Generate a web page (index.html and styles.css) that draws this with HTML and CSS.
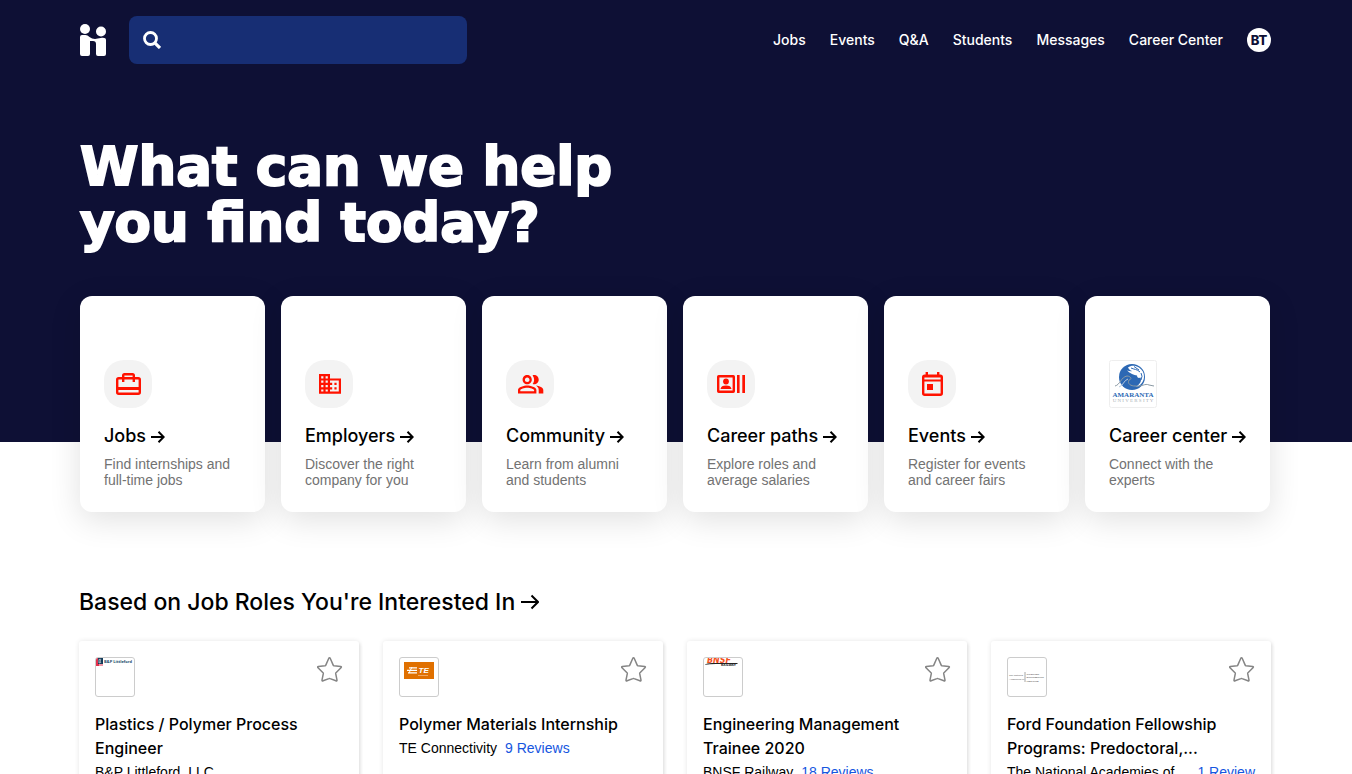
FILE: index.html
```
<!DOCTYPE html>
<html lang="en">
<head>
<meta charset="utf-8">
<meta name="viewport" content="width=device-width, initial-scale=1">
<title>Home</title>
<link rel="stylesheet" href="styles.css">
</head>
<body>
<svg class="defs" aria-hidden="true">
  <symbol id="arrow" viewBox="0 0 14 12"><path d="M0 6h13M7.500.8l5.200 5.200-5.200 5.200" fill="none" stroke="currentColor" stroke-width="2"/></symbol>
  <symbol id="arrow-thin" viewBox="0 0 18 16"><path d="M0 8h17M10.500 1.500l6.500 6.500-6.500 6.500" fill="none" stroke="currentColor" stroke-width="2"/></symbol>
  <symbol id="star" viewBox="0 0 26 26"><path d="M12.500.8q.5 0 .8.700l2.900 6.600q.2.500.8.600l6.600.8q1.400.3.400 1.300l-5 4.900q-.4.400-.3 1l1.300 6.300q.1 1.400-1.100.8L13.100 21.600q-.6-.3-1.200 0l-5.800 2.200q-1.200.6-1.100-.8L6.300 16.700q.1-.6-.3-1l-5-4.900q-1-1 .4-1.300l6.600-.8q.6-.1.800-.6l2.900-6.600q.3-.7.800-.7z" fill="none" stroke="#858585" stroke-width="1.500"/></symbol>
</svg>

<div class="hero">
  <header class="topbar">
    <a class="brand" href="#" aria-label="Home">
      <svg width="26" height="32" viewBox="0 0 26 32" fill="#fff"><circle cx="5" cy="5" r="5"/><circle cx="21" cy="7.500" r="5"/><path d="M0 13q0-2 2-2h3.500q2 0 4 2 2.500 2 5.500 2l7-1.200q4-.3 4 2.200v14q0 2-2 2h-6q-2 0-2-2V20q0-3-3-3h-3v13q0 2-2 2H2q-2 0-2-2z"/></svg>
    </a>
    <form class="search" role="search">
      <svg width="18" height="18" viewBox="0 0 18 18" fill="none" stroke="#fff" stroke-width="2.800"><circle cx="7.500" cy="7.500" r="6"/><path d="M11.800 11.800l5.200 5.200" stroke-width="3.200"/></svg>
      <input class="search-input" type="search" aria-label="Search">
    </form>
    <nav class="nav">
      <a href="#">Jobs</a>
      <a href="#">Events</a>
      <a href="#">Q&amp;A</a>
      <a href="#">Students</a>
      <a href="#">Messages</a>
      <a href="#">Career Center</a>
      <button class="avatar" type="button">BT</button>
    </nav>
  </header>
  <h1 class="headline">What can we help<br>you find today?</h1>
</div>

<main>
  <div class="tiles">
    <a class="tile" href="#">
      <svg class="badge" viewBox="0 0 48 48" fill="none" stroke="#ff1200" stroke-width="2.400"><rect x="13.200" y="18.200" width="22.600" height="15.600" rx="1.500"/><path d="M13 28.500h23" stroke-width="3"/><path d="M19.200 22v-6.500q0-1.300 1.300-1.300h8q1.300 0 1.300 1.300V22"/></svg>
      <h2 class="tile-title">Jobs <svg class="arrow"><use href="#arrow"/></svg></h2>
      <p class="tile-text">Find internships and full-time jobs</p>
    </a>
    <a class="tile" href="#">
      <svg class="badge" viewBox="0 0 48 48" fill="#ff1200"><path transform="translate(11.800 10.700) scale(1.100)" d="M12 7V3H2v18h20V7H12zM6 19H4v-2h2v2zm0-4H4v-2h2v2zm0-4H4V9h2v2zm0-4H4V5h2v2zm4 12H8v-2h2v2zm0-4H8v-2h2v2zm0-4H8V9h2v2zm0-4H8V5h2v2zm10 12h-8v-2h2v-2h-2v-2h2v-2h-2V9h8v10zm-2-8h-2v2h2v-2zm0 4h-2v2h2v-2z"/></svg>
      <h2 class="tile-title">Employers <svg class="arrow"><use href="#arrow"/></svg></h2>
      <p class="tile-text">Discover the right company for you</p>
    </a>
    <a class="tile" href="#">
      <svg class="badge" viewBox="0 0 48 48" fill="#ff1200"><path transform="translate(10.850 10.500) scale(1.150)" d="M16.670 13.130C18.040 14.060 19 15.320 19 17v3h4v-3c0-2.180-3.570-3.470-6.330-3.870zM15 12c2.210 0 4-1.790 4-4s-1.790-4-4-4c-.47 0-.91.1-1.330.24C14.500 5.270 15 6.580 15 8s-.5 2.730-1.330 3.760c.42.14.86.24 1.330.24zM9 12c2.210 0 4-1.790 4-4s-1.790-4-4-4-4 1.790-4 4 1.790 4 4 4zm0-6c1.100 0 2 .9 2 2s-.9 2-2 2-2-.9-2-2 .9-2 2-2zM9 13c-2.670 0-8 1.340-8 4v3h16v-3c0-2.660-5.330-4-8-4zm6 5H3v-.99C3.200 16.290 6.300 15 9 15s5.800 1.290 6 2v1z"/></svg>
      <h2 class="tile-title">Community <svg class="arrow"><use href="#arrow"/></svg></h2>
      <p class="tile-text">Learn from alumni and students</p>
    </a>
    <a class="tile" href="#">
      <svg class="badge" viewBox="0 0 48 48" fill="#ff1200"><rect x="11.200" y="16.200" width="15.600" height="15.600" rx=".5" fill="none" stroke="#ff1200" stroke-width="2.400"/><circle cx="19" cy="21.500" r="2.900"/><path d="M13.500 29q.5-3.400 5.500-3.400t5.500 3.400zM30 15h2.600v18H30zM35.300 15H38v18h-2.700z"/></svg>
      <h2 class="tile-title">Career paths <svg class="arrow"><use href="#arrow"/></svg></h2>
      <p class="tile-text">Explore roles and average salaries</p>
    </a>
    <a class="tile" href="#">
      <svg class="badge" viewBox="0 0 48 48" fill="none" stroke="#ff1200" stroke-width="2.400"><rect x="15.200" y="15.700" width="18.600" height="19" rx="1.500"/><path d="M15 16.500h19M15 20.500h19" stroke-width="1.800"/><path d="M18.800 12v4M30.200 12v4"/><path d="M19 24h6v6h-6z" fill="#ff1200" stroke="none"/></svg>
      <h2 class="tile-title">Events <svg class="arrow"><use href="#arrow"/></svg></h2>
      <p class="tile-text">Register for events and career fairs</p>
    </a>
    <a class="tile" href="#">
      <svg class="badge badge-logo" viewBox="0 0 48 48"><rect x=".5" y=".5" width="47" height="47" rx="2" fill="#fff" stroke="#eee"/><circle cx="23" cy="17" r="13" fill="#2c68b4"/><path d="M19 7.500c3-2.500 7-2.500 11 0 3.500 2.500 5 5 5 9 0 5-3 9-8 10.500 4-3 6-6 4.500-9.500-2 1-3.500 0-3.500-2-3-.5-7-2-10-5 2 .5 4 1 5 .5-2-.5-3-1.500-4-3.500z" fill="#fff"/><path d="M22 8c3 1.500 6 1 9 4M25 6.500l5 3.500M32 13q2 3 0 7" fill="none" stroke="#2c68b4"/><path d="M6 26c5-1 6-9 12-10 3 0 6 3 2 4-2 4 2 6 6 6 7 1 10-3 14-1l5 1" fill="none" stroke="#8b9aa4" stroke-width="1"/><path d="M10 27c4-1 5-7 9-8" fill="none" stroke="#b9cbe0"/><text class="logo-name" x="24" y="37" text-anchor="middle">AMARANTA</text><text class="logo-sub" x="24" y="42" text-anchor="middle">U N I V E R S I T Y</text></svg>
      <h2 class="tile-title">Career center <svg class="arrow"><use href="#arrow"/></svg></h2>
      <p class="tile-text">Connect with the experts</p>
    </a>
  </div>

  <section class="roles">
    <h2 class="roles-title"><a href="#">Based on Job Roles You're Interested In <svg class="arrow-large"><use href="#arrow-thin"/></svg></a></h2>
    <div class="jobs">
      <article class="job">
        <div class="job-top">
          <svg class="job-logo" viewBox="0 0 38 38"><path d="M0 0h3v8H0z" fill="#e1304c"/><path d="M2 0h5v6H2z" fill="#123a59"/><path d="M3 1.500q3-1 1 1.500 2 2-1 2z" fill="none" stroke="#fff" stroke-width=".6"/><path d="M0 7h7" stroke="#e1304c"/><text class="bp-text" x="8" y="5">B&amp;P Littleford</text></svg>
          <button class="save" type="button" aria-label="Save job"><svg width="26" height="26"><use href="#star"/></svg></button>
        </div>
        <h3 class="job-title">Plastics / Polymer Process Engineer</h3>
        <p class="job-company"><span class="company">B&amp;P Littleford, LLC</span></p>
      </article>
      <article class="job">
        <div class="job-top">
          <svg class="job-logo" viewBox="0 0 38 38"><path d="M4 4h30v17H4z" fill="#e07000"/><path d="M9 9.800h8M7 12.300h10M8 14.800h9" stroke="#fff" stroke-width="1.300"/><path d="M12 9l-3 6" stroke="#fff"/><text class="te-text" x="18.500" y="15.300">TE</text><path d="M18 17.500h10" stroke="#f3b57a" stroke-width=".8"/></svg>
          <button class="save" type="button" aria-label="Save job"><svg width="26" height="26"><use href="#star"/></svg></button>
        </div>
        <h3 class="job-title">Polymer Materials Internship</h3>
        <p class="job-company"><span class="company">TE Connectivity</span><a href="#">9 Reviews</a></p>
      </article>
      <article class="job">
        <div class="job-top">
          <svg class="job-logo" viewBox="0 0 38 38"><text class="bnsf-text" x="3" y="5">BNSF</text><path d="M0 6.800q3-1.800 8-1.800h26l-1 1H12q-6 0-12 .8z" fill="#222"/><text class="rail-text" x="17" y="8">RAILWAY</text></svg>
          <button class="save" type="button" aria-label="Save job"><svg width="26" height="26"><use href="#star"/></svg></button>
        </div>
        <h3 class="job-title">Engineering Management Trainee 2020</h3>
        <p class="job-company"><span class="company">BNSF Railway</span><a href="#">18 Reviews</a></p>
      </article>
      <article class="job">
        <div class="job-top">
          <svg class="job-logo" viewBox="0 0 76 76"><g class="nas-text"><text x="2" y="36">The National</text><text x="2" y="43">Academies of</text><text x="37" y="33">SCIENCES</text><text x="37" y="40">ENGINEERING</text><text x="37" y="47">MEDICINE</text></g><path d="M34 28v20" stroke="#888" stroke-width="1.500"/></svg>
          <button class="save" type="button" aria-label="Save job"><svg width="26" height="26"><use href="#star"/></svg></button>
        </div>
        <h3 class="job-title">Ford Foundation Fellowship Programs: Predoctoral,...</h3>
        <p class="job-company job-company-wide"><span class="company">The National Academies of</span><a href="#">1 Review</a></p>
      </article>
    </div>
  </section>
</main>
</body>
</html>
```
FILE: styles.css
```
* { box-sizing: border-box; }

body {
  margin: 0;
  background: #fff;
  color: #000;
  font-family: Inter, "Liberation Sans", sans-serif;
  font-size: 14px;
}

h1, h2, h3, p { margin: 0; font-weight: 500; }
a { color: inherit; text-decoration: none; }
button { padding: 0; border: 0; background: none; font: inherit; cursor: pointer; }
.defs { position: absolute; width: 0; height: 0; }

.hero {
  padding: 0 81px 191px 80px;
  background: #0e1035;
  color: #fff;
}

.topbar {
  display: flex;
  align-items: center;
  height: 80px;
}
.brand { display: flex; margin-right: 23px; }
.search {
  display: flex;
  align-items: center;
  width: 338px;
  height: 48px;
  padding: 0 14px;
  border-radius: 8px;
  background: #172e74;
}
.search svg { flex: none; }
.search-input {
  flex: 1;
  min-width: 0;
  height: 32px;
  margin-left: 12px;
  border: 0;
  outline: 0;
  background: transparent;
  color: #fff;
  font: inherit;
}
.nav {
  display: flex;
  align-items: center;
  gap: 24px;
  margin-left: auto;
  font-weight: 500;
  line-height: 24px;
  white-space: nowrap;
}
.avatar {
  width: 24px;
  height: 24px;
  border-radius: 50%;
  background: #fff;
  color: #0e1035;
  font-size: 13px;
  font-weight: 800;
}

.headline {
  padding-top: 59px;
  font-family: "DejaVu Sans", sans-serif;
  font-size: 53px;
  font-weight: 700;
  line-height: 56px;
  white-space: nowrap;
  -webkit-text-stroke: 2px #fff;
}

.tiles {
  display: grid;
  grid-template-columns: repeat(6, 1fr);
  gap: 16px;
  margin-top: -146px;
  padding: 0 82px 0 80px;
}
.tile {
  padding: 64px 24px 24px;
  border-radius: 12px;
  background: #fff;
  box-shadow: 0 8px 32px rgba(0, 0, 0, 0.12);
}
.badge {
  display: block;
  width: 48px;
  height: 48px;
  border-radius: 20px;
  background: #f3f3f3;
}
.badge-logo { border-radius: 0; background: none; }
.logo-name { fill: #2c68b4; font: 700 7px "Liberation Serif", serif; }
.logo-sub { fill: #a9b0b5; font: 400 5px "Liberation Serif", serif; }
.tile-title {
  margin-top: 16px;
  font-size: 18px;
  line-height: 24px;
  white-space: nowrap;
}
.arrow { width: 14px; height: 12px; vertical-align: -1px; }
.tile-text {
  margin-top: 8px;
  color: #727272;
  font-family: "Liberation Sans", sans-serif;
  font-weight: 400;
  line-height: 16px;
}

.roles { padding: 74px 81px 40px 79px; }
.roles-title { font-size: 23px; line-height: 32px; }
.arrow-large { width: 18px; height: 16px; }
.jobs {
  display: grid;
  grid-template-columns: repeat(4, 1fr);
  gap: 24px;
  margin-top: 23px;
}
.job {
  min-width: 0;
  padding: 16px 16px 24px;
  border-radius: 3px;
  background: #fff;
  box-shadow: 0 0 5px rgba(0, 0, 0, 0.1), 2px 2px 3px rgba(0, 0, 0, 0.06);
}
.job-top {
  display: flex;
  align-items: flex-start;
  justify-content: space-between;
}
.job-logo {
  width: 40px;
  height: 40px;
  border: 1px solid #ccc;
  border-radius: 3px;
}
.save { display: flex; }
.bp-text { fill: #234d6b; font: 700 4px "Open Sans", sans-serif; }
.te-text { fill: #fff; font: italic 700 8px "Liberation Sans", sans-serif; }
.bnsf-text { fill: #f4511e; font: italic 700 8px "DejaVu Sans", sans-serif; }
.rail-text { fill: #222; font: 700 3px "DejaVu Sans", sans-serif; }
.nas-text { fill: #555; font: 400 5px "Liberation Sans", sans-serif; }
.job-title { margin-top: 15px; font-size: 16px; line-height: 24px; }
.job-company {
  display: flex;
  gap: 8px;
  font-family: "Liberation Sans", sans-serif;
  font-weight: 400;
  line-height: 24px;
  white-space: nowrap;
}
.job-company a { color: #1656e0; }
.job-company-wide { justify-content: space-between; }
```
